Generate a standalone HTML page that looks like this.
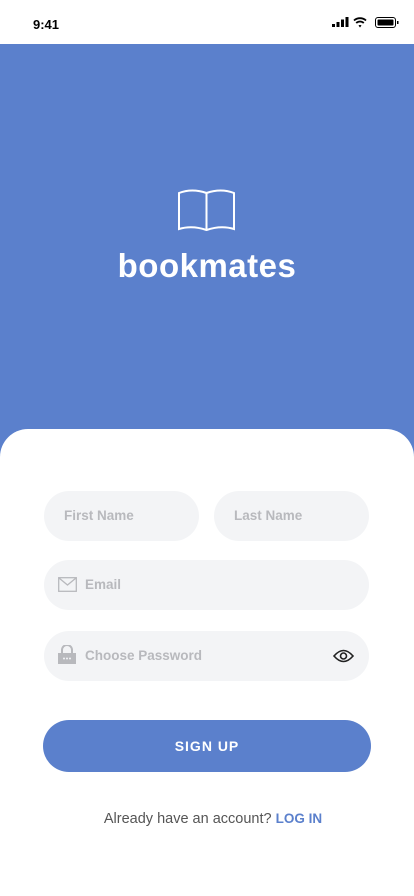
<!DOCTYPE html>
<html><head><meta charset="utf-8"><style>
*{margin:0;padding:0;box-sizing:border-box}
body{width:414px;height:896px;position:relative;background:#fff;font-family:"Liberation Sans",sans-serif;overflow:hidden}
.hero{position:absolute;top:44px;left:0;width:414px;height:420px;background:#5b80cc}
.card{position:absolute;top:429px;left:0;width:414px;height:467px;background:#fff;border-radius:28px 28px 0 0}
.in{position:absolute;height:50px;border-radius:25px;background:#f3f4f6;color:#b8b9bd;font-weight:bold;font-size:13.5px;line-height:50px}
.logo{position:absolute;top:247px;width:414px;text-align:center;color:#fff;font-weight:bold;font-size:33px;letter-spacing:0.5px}
</style></head><body>
<div style="position:absolute;left:33px;top:17px;font-weight:bold;font-size:13px">9:41</div>
<svg style="position:absolute;left:332px;top:16px" width="68" height="14" viewBox="0 0 68 14">
<rect x="0" y="8" width="3" height="3" fill="#000"/><rect x="4.5" y="6" width="3" height="5" fill="#000"/><rect x="9" y="3.5" width="3" height="7.5" fill="#000"/><rect x="13.5" y="1" width="3" height="10" fill="#000"/>
<path d="M22 4.5a9 9 0 0 1 12 0M24.2 7a5.5 5.5 0 0 1 7.6 0" stroke="#000" stroke-width="1.8" fill="none"/><path d="M26.5 9.5l1.5 2 1.5-2a2.5 2.5 0 0 0-3 0z" fill="#000"/>
<rect x="43.5" y="1.5" width="20" height="10" rx="2.5" stroke="#000" fill="none"/><rect x="45.5" y="3.5" width="16" height="6" rx="1" fill="#000"/><rect x="65" y="5" width="1.5" height="3" fill="#000"/>
</svg>
<div class="hero"></div>
<svg style="position:absolute;left:178px;top:189px" width="57" height="43" viewBox="0 0 57 43" fill="none" stroke="#fff" stroke-width="2">
<path d="M1 4Q14 -1 28.5 4Q43 -1 56 4V40Q43 36 28.5 41Q14 36 1 40Z"/><path d="M28.5 4V41"/>
</svg>
<div class="logo">bookmates</div>
<div class="card"></div>
<div class="in" style="left:44px;top:491px;width:155px;padding-left:20px">First Name</div>
<div class="in" style="left:214px;top:491px;width:155px;padding-left:20px">Last Name</div>
<div class="in" style="left:44px;top:560px;width:325px;padding-left:41px">Email</div>
<svg style="position:absolute;left:58px;top:577px" width="19" height="15" viewBox="0 0 19 15" fill="none" stroke="#b8b9bd" stroke-width="1.3"><rect x="0.7" y="0.7" width="17.6" height="13.6"/><path d="M0.7 0.7L9.5 8L18.3 0.7"/></svg>
<div class="in" style="left:44px;top:631px;width:325px;padding-left:41px">Choose Password</div>
<svg style="position:absolute;left:58px;top:645px" width="18" height="19" viewBox="0 0 18 19"><path d="M4 8V5a5 5 0 0 1 10 0v3" stroke="#b8b9bd" stroke-width="2" fill="none"/><rect x="0" y="8" width="18" height="11" fill="#b8b9bd"/><circle cx="6" cy="13.5" r="1" fill="#f3f4f6"/><circle cx="9" cy="13.5" r="1" fill="#f3f4f6"/><circle cx="12" cy="13.5" r="1" fill="#f3f4f6"/></svg>
<svg style="position:absolute;left:333px;top:648px" width="21" height="16" viewBox="0 0 21 16" fill="none" stroke="#222" stroke-width="1.6"><path d="M1 8Q10.5 -3 20 8Q10.5 19 1 8Z"/><circle cx="10.5" cy="8" r="3"/></svg>
<div style="position:absolute;left:43px;top:720px;width:328px;height:52px;border-radius:26px;background:#5b80cc;color:#fff;font-weight:bold;font-size:14px;letter-spacing:1px;text-align:center;line-height:52px">SIGN UP</div>
<div style="position:absolute;top:811px;left:6px;width:414px;text-align:center;font-size:14.5px;color:#555">Already have an account? <b style="color:#5b80cc;font-size:13.5px">LOG IN</b></div>
</body></html>
